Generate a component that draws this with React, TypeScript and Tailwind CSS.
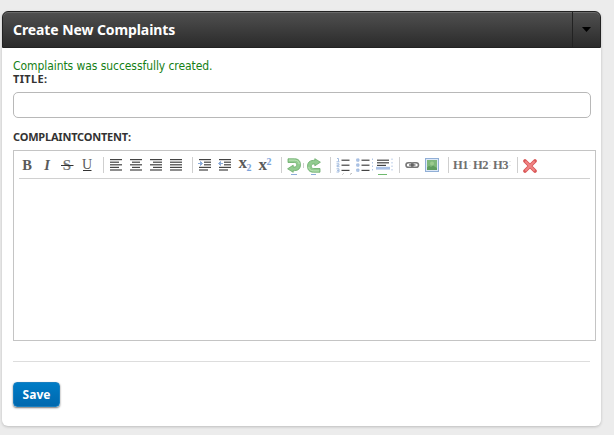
import type { ReactNode } from "react";

function Icon({ children }: { children?: ReactNode }) {
  return (
    <svg width="20" height="20" viewBox="0 0 20 20" className="block shrink-0" fill="none">
      {children}
    </svg>
  );
}

function Sep() {
  return <span className="ml-1.5 mr-0.5 h-4 w-px shrink-0 bg-[#cfcfcf]" />;
}

function Glyph({ t, x, y, size, fill = "#5a5a5a", italic, bold, spacing }: {
  t: string; x: number; y: number; size: number; fill?: string; italic?: boolean; bold?: boolean; spacing?: number;
}) {
  return (
    <text x={x} y={y} fontSize={size} fill={fill} fontFamily="'Liberation Serif', serif" textAnchor="middle"
      fontStyle={italic ? "italic" : "normal"} fontWeight={bold ? 700 : 400} letterSpacing={spacing}>
      {t}
    </text>
  );
}

function Lines({ rows, color = "#444" }: { rows: number[][]; color?: string }) {
  return (
    <>
      {rows.map(([x, y, w], i) => (
        <rect key={i} x={x} y={y} width={w} height="1.2" fill={color} />
      ))}
    </>
  );
}

function Curl() {
  return (
    <>
      <path
        d="M4 3.8H10.5C14.6 3.8 16.5 6.2 16.5 9.8C16.5 13.3 14.4 15.6 10.8 15.6H9.2V17.3L3.6 13.8L9.2 10.2V12H10.4C12 12 12.7 11.1 12.7 9.8C12.7 8.4 12 7.5 10.4 7.5H4Z"
        fill="#92cc90" stroke="#68ab68" strokeWidth="0.8" />
      <path d="M4.8 5.1H10.5C13.2 5.1 15 6.6 15.2 9" stroke="#bfe4ba" strokeWidth="1" />
    </>
  );
}

function Toolbar() {
  return (
    <div className="ml-[5px] mr-[5px] flex h-[28px] items-start border-b border-[#d0d0d0] pt-1">
      <div className="-ml-[2px] flex items-center">
        <Icon><Glyph t="B" x={10} y={15} size={14.5} bold /></Icon>
        <Icon><Glyph t="I" x={10} y={15} size={14.5} bold italic /></Icon>
        <Icon><Glyph t="S" x={10} y={15} size={15} bold fill="#777" /><path d="M4 10.5H16.5" stroke="#333" /></Icon>
        <Icon><Glyph t="U" x={10} y={14} size={14} /><path d="M6 15.5H14.5" stroke="#333" /></Icon>
        <Sep />
        <Icon><Lines rows={[[4, 4, 12], [4, 6.6, 9], [4, 9.2, 12], [4, 11.8, 9], [4, 14.4, 12]]} /></Icon>
        <Icon><Lines rows={[[4, 4, 12], [6, 6.6, 8], [4, 9.2, 12], [6, 11.8, 8], [4, 14.4, 12]]} /></Icon>
        <Icon><Lines rows={[[4, 4, 12], [7, 6.6, 9], [4, 9.2, 12], [7, 11.8, 9], [4, 14.4, 12]]} /></Icon>
        <Icon><Lines rows={[[4, 4, 12], [4, 6.6, 12], [4, 9.2, 12], [4, 11.8, 12], [4, 14.4, 12]]} /></Icon>
        <Sep />
        <Icon><Lines rows={[[4, 4, 12], [9, 6.6, 7], [9, 9.2, 7], [4, 11.8, 12], [4, 14.4, 9]]} /><path d="M3 8.5H6M5.5 6.5L7.5 8.5L5.5 10.5Z" stroke="#8cabd8" fill="#8cabd8" /></Icon>
        <Icon><Lines rows={[[4, 4, 12], [9, 6.6, 7], [9, 9.2, 7], [4, 11.8, 12], [4, 14.4, 9]]} /><path d="M8 8.5H5M5.5 6.5L3.5 8.5L5.5 10.5Z" stroke="#8cabd8" fill="#8cabd8" /></Icon>
        <Icon><Glyph t="x" x={7.8} y={13} size={17} bold /><Glyph t="2" x={14} y={16} size={10} bold fill="#7ba3da" /></Icon>
        <Icon><Glyph t="x" x={7.8} y={15} size={17} bold /><Glyph t="2" x={14} y={10} size={10} bold fill="#7ba3da" /></Icon>
        <Sep />
        <Icon>
          <Curl />
          <path d="M7 19.5H13" stroke="#8cabd8" />
          <path d="M19.5 8V13" stroke="#aaa" strokeWidth="0.6" />
        </Icon>
        <Icon>
          <g transform="matrix(-1 0 0 -1 20 21)"><Curl /></g>
          <path d="M7 19.5H12" stroke="#8cabd8" />
        </Icon>
        <Sep />
        <Icon>
          <Lines rows={[[8.5, 4.6, 8], [8.5, 9.6, 8], [8.5, 14.8, 8]]} />
          <path d="M4 3.5H5.5V6.5M3.5 6.8H6.5M3.5 8.8H6V10.3H4V11.7H6.5M3.5 13.8H6V17H3.5M4 15.4H6" stroke="#9ab5dd" strokeWidth="0.9" />
          <path d="M10.5 18.5L9.5 19.5M18.5 18L17.5 19.5" stroke="#777" strokeWidth="0.7" />
        </Icon>
        <Icon>
          <Lines rows={[[8.5, 4.6, 8], [8.5, 9.6, 8], [8.5, 14.8, 8]]} />
          <path d="M3.7 3.9H6V6.2H3.7ZM3.7 8.9H6V11.2H3.7ZM3.7 14H6V16.3H3.7Z" fill="#b9cdea" stroke="#9ab5dd" strokeWidth="0.8" />
          <path d="M19.5 3.5V17" stroke="#9ab5dd" strokeWidth="0.8" strokeDasharray="1.5 2" />
        </Icon>
        <Icon>
          <Lines rows={[[4, 4.6, 12], [4, 7.2, 12], [4, 9.8, 9]]} />
          <rect x="3" y="11.8" width="14" height="2.8" fill="#a9c0e6" />
          <path d="M5 19.5H14" stroke="#6eb96e" />
          <path d="M19 3.5V17" stroke="#9ab5dd" strokeWidth="0.8" strokeDasharray="1.5 2" />
        </Icon>
        <Sep />
        <Icon>
          <rect x="4" y="7.7" width="7" height="4.6" rx="2.3" stroke="#777" strokeWidth="1.6" />
          <rect x="9.5" y="7.7" width="7" height="4.6" rx="2.3" stroke="#777" strokeWidth="1.6" />
          <path d="M7 10H13.5" stroke="#555" strokeWidth="1.2" />
        </Icon>
        <Icon>
          <rect x="3.5" y="3.5" width="13" height="13" fill="#dce8f8" stroke="#91afd6" />
          <rect x="5" y="5" width="10" height="10" fill="#7fb77b" />
          <path d="M5 12.5L7 10.8L9 12L11 10.5L15 13V15H5Z" fill="#5f9d5f" />
          <circle cx="10" cy="8.5" r="2" fill="#9bcb8d" />
        </Icon>
        <Sep />
        <Icon><Glyph t="H1" x={9.5} y={14} size={12.5} spacing={-0.5} bold fill="#707070" /><path d="M19 6V14" stroke="#bbb" strokeWidth="0.7" strokeDasharray="1 3" /></Icon>
        <Icon><Glyph t="H2" x={9.5} y={14} size={12.5} spacing={-0.5} bold fill="#707070" /><path d="M19 6V14" stroke="#bbb" strokeWidth="0.7" strokeDasharray="1 3" /></Icon>
        <Icon><Glyph t="H3" x={9.5} y={14} size={12.5} spacing={-0.5} bold fill="#707070" /><path d="M19 6V14" stroke="#bbb" strokeWidth="0.7" strokeDasharray="1 3" /></Icon>
        <Sep />
        <Icon>
          <path d="M5 6L15 16M15 6L5 16" stroke="#d95757" strokeWidth="3.8" strokeLinecap="round" />
          <path d="M5.3 6.3L14.7 15.7M14.7 6.3L5.3 15.7" stroke="#f08484" strokeWidth="2" />
        </Icon>
      </div>
    </div>
  );
}

export default function App() {
  return (
    <div className="h-[435px] w-[614px] overflow-hidden bg-[#ececec] pl-0.5 pt-[11px] font-['Noto_Sans',sans-serif] text-[#333]">
      <section className="h-[415px] w-[599px] rounded-[6px] bg-white shadow-[0_1px_3px_rgba(0,0,0,0.2)]">
        <header className="flex h-[37px] items-center rounded-t-[6px] border border-[#222] bg-linear-to-b from-[#505050] to-[#2b2b2b] shadow-[inset_0_1px_0_#6a6a6a]">
          <h1 className="flex-1 pl-2.5 text-[14px] font-bold tracking-[-0.09px] text-white">Create New Complaints</h1>
          <button className="flex h-full w-7 items-center justify-center border-l border-[#222]">
            <svg width="9" height="5"><path d="M0 0H9L4.5 5Z" fill="#000" /></svg>
          </button>
        </header>
        <form className="flex flex-col pl-[11px] pt-[11px]">
          <p className="h-[14px] font-['DejaVu_Sans_Condensed','DejaVu_Sans',sans-serif] text-[12px] leading-[15px] tracking-[-0.07px] text-[#158015]">Complaints was successfully created.</p>
          <label className="h-3 text-[11px] font-bold leading-3 tracking-[0.35px]">TITLE:</label>
          <input className="mt-[7px] h-[26px] w-[578px] rounded-[5px] border border-[#b8b8b8] bg-white" />
          <label className="mt-[13px] h-3 text-[11px] font-bold leading-3 tracking-[-0.2px]">COMPLAINTCONTENT:</label>
          <div className="mt-[7px] h-[191px] w-[583px] border border-[#c4c4c4]"><Toolbar /></div>
          <hr className="mt-5 w-[577px] border-[#ddd]" />
          <button className="mt-5 h-[25px] w-[47px] rounded-[4px] border border-[#1a7fc0] bg-linear-to-b from-[#007cc6] to-[#0068ae] text-[12px] font-bold text-white shadow-[0_1px_2px_rgba(0,0,0,0.55)]">Save</button>
        </form>
      </section>
    </div>
  );
}
